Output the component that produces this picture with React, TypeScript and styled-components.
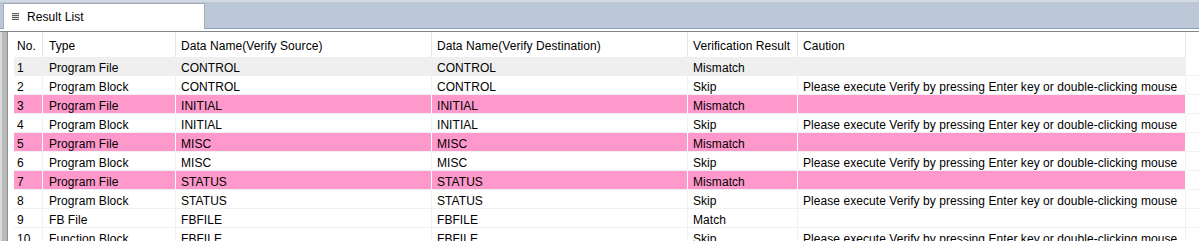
import React from "react";
import styled, { createGlobalStyle } from "styled-components";

const Global = createGlobalStyle`
  html, body { margin: 0; padding: 0; background: #ffffff; }
  body { font-family: "Liberation Sans", Arial, sans-serif; font-size: 12px; color: #000; letter-spacing: 0.06px; }
`;

const Window = styled.div`
  width: 1199px;
  height: 241px;
  overflow: hidden;
  display: flex;
  flex-direction: column;
  background: #ffffff;
`;

const TabStrip = styled.div`
  flex: none;
  display: flex;
  align-items: flex-end;
  padding-left: 3px;
  background: linear-gradient(#d3dae4 0px, #d3dae4 2px, #bcc8d8 2px);
  border-bottom: 1px solid #8aa4c0;
  box-sizing: border-box;
  height: 29px;
`;

const Tab = styled.div`
  width: 202px;
  height: 26px;
  box-sizing: border-box;
  background: #ffffff;
  border: 1px solid #a7acb4;
  border-bottom: none;
  margin-bottom: -1px;
  display: flex;
  align-items: center;
  gap: 8px;
  padding-left: 8px;
  position: relative;
  z-index: 1;
`;

const TabLabel = styled.span`
  font-size: 12px;
  color: #000;
  padding-top: 1px;
`;

const Spacer = styled.div`
  height: 2px;
  flex: none;
  background: #ffffff;
  border-bottom: 1px solid #80868e;
`;

const Body = styled.div`
  flex: 1;
  display: flex;
  min-height: 0;
`;

const Gutter = styled.div`
  width: 7px;
  flex: none;
  background: linear-gradient(90deg, #d9d9d9 0px, #d9d9d9 2px, #b9b9b9 2px);
  border-right: 1px solid #8c8c8c;
`;

const GridArea = styled.div`
  flex: 1;
  padding-left: 6px;
  background: #ffffff;
  min-width: 0;
`;

const COLS = "29px 133px 256px 256px 110px 388px 1fr";

const HeaderRow = styled.div`
  display: grid;
  grid-template-columns: ${COLS};
  height: 25px;
`;

const HeaderCell = styled.div<{ $pad: number; $last?: boolean }>`
  display: flex;
  align-items: center;
  padding-left: ${(p) => p.$pad}px;
  padding-top: 2px;
  white-space: nowrap;
  border-right: ${(p) => (p.$last ? "none" : "1px solid #e6e6e6")};
  overflow: hidden;
`;

type Variant = "normal" | "pink" | "gray";

const bgFor = (v: Variant) =>
  v === "pink" ? "#ff99cc" : v === "gray" ? "#efefef" : "#ffffff";

const Row = styled.div`
  display: grid;
  grid-template-columns: ${COLS};
  height: 19px;
  box-sizing: border-box;
  border-bottom: 1px solid #f0f0f0;
`;

const Cell = styled.div<{ $variant: Variant; $pad: number; $filler?: boolean }>`
  display: flex;
  align-items: center;
  padding-left: ${(p) => p.$pad}px;
  padding-top: 4px;
  white-space: nowrap;
  overflow: hidden;
  background: ${(p) => (p.$filler ? "#ffffff" : bgFor(p.$variant))};
  border-right: ${(p) =>
    p.$filler ? "none" : p.$variant === "pink" ? "1px solid #ffffff" : "1px solid #f0f0f0"};
`;

const PAD = [3, 6, 5, 5, 5, 5];

const headers = [
  "No.",
  "Type",
  "Data Name(Verify Source)",
  "Data Name(Verify Destination)",
  "Verification Result",
  "Caution",
];

const CAUTION = "Please execute Verify by pressing Enter key or double-clicking mouse";

const rows: { v: Variant; c: string[] }[] = [
  { v: "gray", c: ["1", "Program File", "CONTROL", "CONTROL", "Mismatch", ""] },
  { v: "normal", c: ["2", "Program Block", "CONTROL", "CONTROL", "Skip", CAUTION] },
  { v: "pink", c: ["3", "Program File", "INITIAL", "INITIAL", "Mismatch", ""] },
  { v: "normal", c: ["4", "Program Block", "INITIAL", "INITIAL", "Skip", CAUTION] },
  { v: "pink", c: ["5", "Program File", "MISC", "MISC", "Mismatch", ""] },
  { v: "normal", c: ["6", "Program Block", "MISC", "MISC", "Skip", CAUTION] },
  { v: "pink", c: ["7", "Program File", "STATUS", "STATUS", "Mismatch", ""] },
  { v: "normal", c: ["8", "Program Block", "STATUS", "STATUS", "Skip", CAUTION] },
  { v: "normal", c: ["9", "FB File", "FBFILE", "FBFILE", "Match", ""] },
  { v: "normal", c: ["10", "Function Block", "FBFILE", "FBFILE", "Skip", CAUTION] },
];

const ListIcon = () => (
  <svg width="7" height="7" viewBox="0 0 7 7" aria-hidden>
    <rect x="0" y="0" width="7" height="1.2" fill="#5a5a5a" />
    <rect x="0" y="2" width="7" height="1.2" fill="#5a5a5a" />
    <rect x="0" y="4" width="7" height="1.2" fill="#5a5a5a" />
    <rect x="0" y="6" width="7" height="1" fill="#5a5a5a" />
  </svg>
);

export default function App() {
  return (
    <>
      <Global />
      <Window>
        <TabStrip>
          <Tab>
            <ListIcon />
            <TabLabel>Result List</TabLabel>
          </Tab>
        </TabStrip>
        <Spacer />
        <Body>
          <Gutter />
          <GridArea>
            <HeaderRow>
              {headers.map((h, i) => (
                <HeaderCell key={h} $pad={PAD[i]}>
                  {h}
                </HeaderCell>
              ))}
              <HeaderCell $pad={0} $last />
            </HeaderRow>
            {rows.map((r) => (
              <Row key={r.c[0]}>
                {r.c.map((t, i) => (
                  <Cell key={i} $variant={r.v} $pad={PAD[i]}>
                    {t}
                  </Cell>
                ))}
                <Cell $variant={r.v} $pad={0} $filler />
              </Row>
            ))}
          </GridArea>
        </Body>
      </Window>
    </>
  );
}
